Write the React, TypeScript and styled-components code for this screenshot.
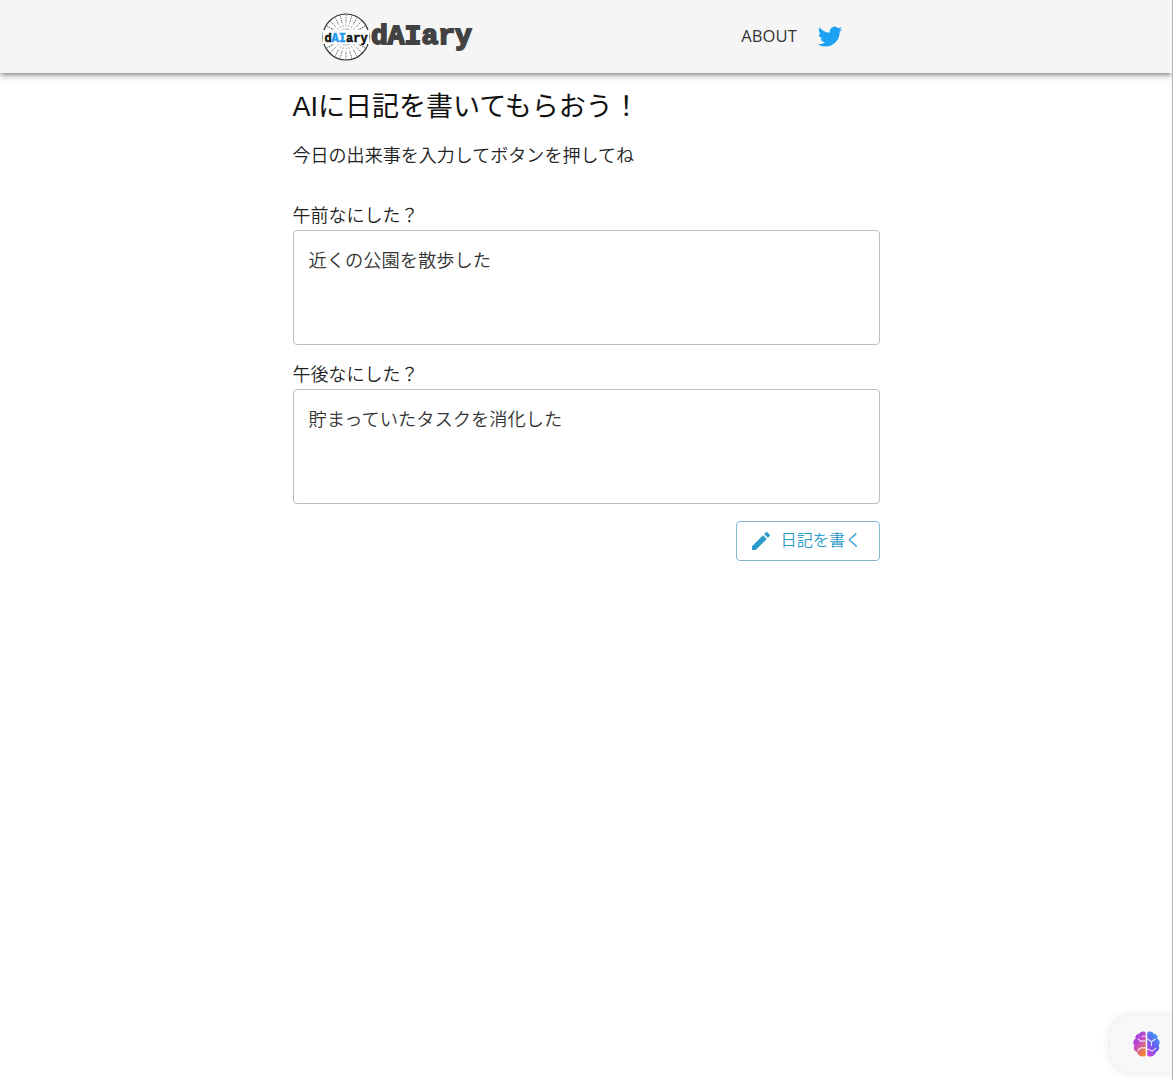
import styled, { createGlobalStyle } from 'styled-components';

const GlobalStyle = createGlobalStyle`
  html, body {
    margin: 0;
    padding: 0;
    background: #fff;
  }
  body {
    font-family: "Liberation Sans", "Noto Sans CJK JP", sans-serif;
    color: #222;
  }
`;

const Page = styled.div`
  position: relative;
  box-sizing: border-box;
  height: 1080px;
  overflow: hidden;
  border-right: 1px solid #b4b4b4;
`;

const Header = styled.header`
  box-sizing: border-box;
  height: 73px;
  padding: 13px 328px 0 322px;
  display: flex;
  justify-content: space-between;
  align-items: flex-start;
  background: #f5f5f5;
  box-shadow: 0 2px 4px -1px rgba(0, 0, 0, 0.35), 0 4px 5px 0 rgba(0, 0, 0, 0.14), 0 1px 10px 0 rgba(0, 0, 0, 0.12);
`;

const Brand = styled.div`
  display: flex;
  align-items: center;
  gap: 1px;
`;

const Wordmark = styled.span`
  font-family: "Liberation Mono", monospace;
  font-size: 28px;
  font-weight: 700;
  line-height: 48px;
  color: #424242;
  -webkit-text-stroke: 1.8px #424242;
`;

const Nav = styled.nav`
  display: flex;
  align-items: center;
  gap: 19px;
  height: 46px;
`;

const NavLink = styled.span`
  font-family: "Open Sans", "Liberation Sans", sans-serif;
  font-size: 16.6px;
  line-height: 20px;
  padding-bottom: 1px;
  color: #333;
  letter-spacing: 0.1px;
`;

const Main = styled.main`
  width: 587px;
  margin: 0 auto;
  padding-top: 16px;
`;

const Title = styled.h1`
  margin: 0;
  font-size: 27px;
  font-weight: 400;
  line-height: 36px;
  color: #111;
`;

const Lead = styled.p`
  margin: 18px 0 0;
  font-size: 18.05px;
  font-weight: 350;
  line-height: 26px;
  color: #222;
`;

const Form = styled.form`
  margin-top: 34px;
  display: flex;
  flex-direction: column;
`;

const Field = styled.label`
  display: flex;
  flex-direction: column;
  margin-bottom: 17px;
`;

const FieldLabel = styled.span`
  font-size: 18px;
  font-weight: 350;
  line-height: 26px;
  color: #222;
`;

const Note = styled.textarea`
  box-sizing: border-box;
  display: block;
  width: 100%;
  height: 115px;
  margin-top: 1px;
  padding: 17px 15px;
  border: 1px solid #bdbdbd;
  border-radius: 4px;
  background: #fff;
  resize: none;
  outline: none;
  font-family: inherit;
  font-size: 18.25px;
  font-weight: 350;
  line-height: 26px;
  color: #333;
`;

const Actions = styled.div`
  display: flex;
  justify-content: flex-end;
`;

const WriteButton = styled.button`
  box-sizing: border-box;
  width: 144px;
  height: 40px;
  display: flex;
  align-items: center;
  gap: 8px;
  padding: 0 0 0 12px;
  border: 1px solid #86b4cf;
  border-radius: 4px;
  background: #fff;
  font-family: inherit;
  font-size: 16.2px;
  font-weight: 350;
  color: #2b9bc9;
`;

const ButtonLabel = styled.span`
  padding-bottom: 4px;
`;

const Widget = styled.div`
  position: absolute;
  right: -1px;
  bottom: 8px;
  width: 63px;
  height: 56px;
  display: flex;
  align-items: center;
  padding-left: 21px;
  box-sizing: border-box;
  background: #f8f8f8;
  border-radius: 20px 0 0 20px;
  box-shadow: 0 0 8px rgba(0, 0, 0, 0.12);
`;

function Logo() {
  const spokes = Array.from({ length: 24 }, (_, i) => i * 15);
  return (
    <svg width="48" height="48" viewBox="0 0 48 48">
      <circle cx="24" cy="24" r="23" fill="#fff" stroke="#333" strokeWidth="1.2" />
      {spokes.map((a) => (
        <line
          key={a}
          x1="24"
          y1="8"
          x2="24"
          y2="2"
          stroke="#666"
          strokeWidth="0.9"
          strokeDasharray="1.5 1"
          transform={`rotate(${a} 24 24)`}
        />
      ))}
      {spokes.map((a) => (
        <line
          key={`in-${a}`}
          x1="24"
          y1="17"
          x2="24"
          y2="8"
          stroke="#999"
          strokeWidth="0.8"
          strokeDasharray="2 1.5"
          transform={`rotate(${a} 24 24)`}
        />
      ))}
      <rect x="1" y="17" width="46" height="14" fill="#fff" />
      <text x="24" y="28.500" textAnchor="middle" fontFamily="Liberation Mono, monospace" fontSize="12" fontWeight="700" stroke="#111" strokeWidth="0.5" fill="#111">
        d<tspan fill="#2196f3" stroke="#2196f3">AI</tspan>ary
      </text>
    </svg>
  );
}

function TwitterIcon() {
  return (
    <svg width="28" height="28" viewBox="0 0 24 24" fill="#1da1f2">
      <path d="M22.46 6c-.77.35-1.6.58-2.46.69.88-.53 1.56-1.37 1.88-2.38-.83.5-1.75.85-2.72 1.05C18.37 4.5 17.26 4 16 4c-2.35 0-4.27 1.92-4.27 4.29 0 .34.04.67.11.98C8.28 9.09 5.11 7.38 3 4.79c-.37.63-.58 1.37-.58 2.15 0 1.49.75 2.81 1.91 3.56-.71 0-1.37-.2-1.95-.5v.03c0 2.08 1.48 3.82 3.44 4.21a4.22 4.22 0 0 1-1.93.07 4.28 4.28 0 0 0 4 2.98 8.521 8.521 0 0 1-5.33 1.84c-.34 0-.68-.02-1.02-.06C3.44 20.29 5.7 21 8.12 21 16 21 20.33 14.46 20.33 8.79c0-.19 0-.37-.01-.56.84-.6 1.56-1.36 2.14-2.23z" />
    </svg>
  );
}

function PencilIcon() {
  return (
    <svg width="24" height="24" viewBox="0 0 24 24" fill="#2b9bc9">
      <path d="M3 17.25V21h3.75L17.81 9.94l-3.75-3.75L3 17.25zM20.71 7.04c.39-.39.39-1.02 0-1.41l-2.34-2.34a.9959.9959 0 0 0-1.41 0l-1.83 1.83 3.75 3.75 1.83-1.83z" />
    </svg>
  );
}

function BrainIcon() {
  return (
    <svg width="31" height="31" viewBox="0 0 28 28">
      <defs>
        <linearGradient id="brainLeft" x1="0" y1="0" x2="0.6" y2="1">
          <stop offset="0" stopColor="#8a3df0" />
          <stop offset="0.55" stopColor="#c44bc8" />
          <stop offset="1" stopColor="#f0843c" />
        </linearGradient>
        <linearGradient id="brainRight" x1="0.8" y1="0" x2="0.2" y2="1">
          <stop offset="0" stopColor="#35a6f5" />
          <stop offset="0.55" stopColor="#6a5cf0" />
          <stop offset="1" stopColor="#c63fd8" />
        </linearGradient>
      </defs>
      <path d="M13.3 3.5C12 1.8 8.6 2 7.6 4.2 5 4.2 3.5 6.4 4.2 8.6 2 10 1.400 13 3 14.800 1.800 17 3 20 5.300 20.600 5.800 23.500 8.800 25.500 11 24.600 12 25 13 24.600 13.300 23.800Z" fill="url(#brainLeft)" />
      <path d="M14.700 3.500C16 1.800 19.400 2 20.400 4.200 23 4.200 24.500 6.400 23.800 8.600 26 10 26.600 13 25 14.800 26.200 17 25 20 22.700 20.600 22.200 23.500 19.200 25.500 17 24.600 16 25 15 24.600 14.700 23.800Z" fill="url(#brainRight)" />
      <g fill="none" stroke="#fff" strokeWidth="1" strokeLinecap="round" opacity="0.85">
        <path d="M13 11H8.500M8.500 11L6.500 9M13 17H9.500C8 17 7 18 6.500 19.500M13 6.500H10" />
        <path d="M15 9L18.500 11.500L22 9M18.500 11.500V15M15 18L19 20L22.500 17.500" />
      </g>
    </svg>
  );
}

export default function App() {
  return (
    <Page>
      <GlobalStyle />
      <Header>
        <Brand>
          <Logo />
          <Wordmark>dAIary</Wordmark>
        </Brand>
        <Nav>
          <NavLink>ABOUT</NavLink>
          <TwitterIcon />
        </Nav>
      </Header>
      <Main>
        <Title>AIに日記を書いてもらおう！</Title>
        <Lead>今日の出来事を入力してボタンを押してね</Lead>
        <Form>
          <Field>
            <FieldLabel>午前なにした？</FieldLabel>
            <Note defaultValue="近くの公園を散歩した" />
          </Field>
          <Field>
            <FieldLabel>午後なにした？</FieldLabel>
            <Note defaultValue="貯まっていたタスクを消化した" />
          </Field>
          <Actions>
            <WriteButton type="button">
              <PencilIcon />
              <ButtonLabel>日記を書く</ButtonLabel>
            </WriteButton>
          </Actions>
        </Form>
      </Main>
      <Widget>
        <BrainIcon />
      </Widget>
    </Page>
  );
}
